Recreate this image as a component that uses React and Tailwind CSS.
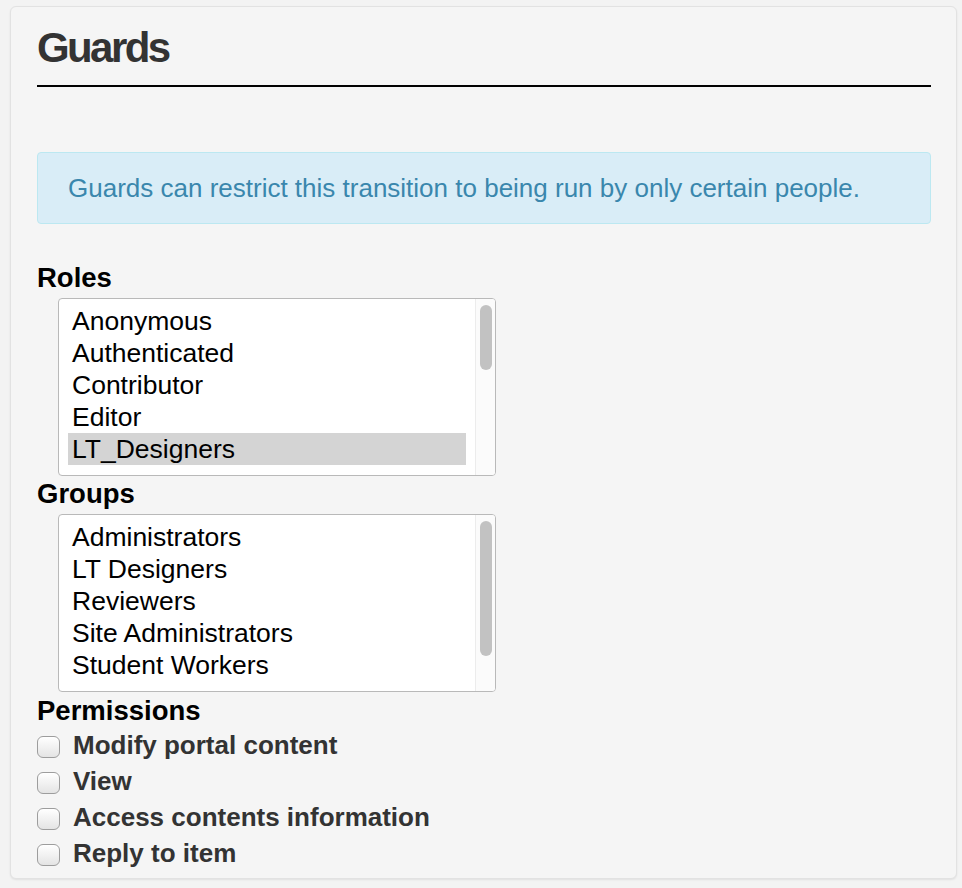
import React from "react";

const roles = ["Anonymous", "Authenticated", "Contributor", "Editor", "LT_Designers"];
const groups = ["Administrators", "LT Designers", "Reviewers", "Site Administrators", "Student Workers"];
const permissions = ["Modify portal content", "View", "Access contents information", "Reply to item"];

const ListBox = ({ items, selected, thumbHeight }) => (
    <div className="ml-[21px] mt-[4px] flex h-[178px] w-[438px] overflow-hidden rounded-[4px] border border-[#b9b9b9] bg-white">
        <div className="flex-1 pl-[9px] pr-[9px] pt-[6px]">
            {items.map((item) => (
                <div
                    key={item}
                    className={
                        "h-[32px] pl-[4px] text-[26.5px] leading-[32px] text-black " +
                        (item === selected ? "bg-[#d4d4d4]" : "")
                    }
                >
                    {item}
                </div>
            ))}
        </div>
        <div className="w-[20px] border-l border-[#ececec] bg-[#fbfbfb] pt-[6px] pl-[4px]">
            <div className="w-[12px] rounded-full bg-[#c2c2c2]" style={{ height: thumbHeight }} />
        </div>
    </div>
);

const Label = ({ children, className = "" }) => (
    <div className={"h-[32px] text-[27.5px] font-bold leading-[32px] text-black " + className}>{children}</div>
);

export default function App() {
    return (
        <div className="min-h-[888px] bg-[#f3f3f3] pt-[6px] pl-[10px] font-['Liberation_Sans',Arial,sans-serif]">
            <div className="h-[873px] w-[947px] rounded-[6px] border border-[#e2e2e2] bg-[#f5f5f5] pl-[26px] pt-[17px] shadow-[0_1px_2px_rgba(0,0,0,0.08)]">
                <div className="w-[894px]">
                    <h1 className="h-[48px] text-[42px] font-bold leading-[48px] tracking-[-2.6px] text-[#333]">
                        Guards
                    </h1>
                    <div className="mt-[13px] h-[2px] bg-black" />

                    <div className="mt-[65px] flex h-[72px] items-center rounded-[4px] border border-[#bce8f1] bg-[#d9edf7] pl-[30px]">
                        <p className="text-[26px] leading-[30px] text-[#3a87ad]">
                            Guards can restrict this transition to being run by only certain people.
                        </p>
                    </div>

                    <Label className="mt-[38px]">Roles</Label>
                    <ListBox items={roles} selected="LT_Designers" thumbHeight={65} />

                    <Label className="mt-[2px]">Groups</Label>
                    <ListBox items={groups} thumbHeight={135} />

                    <Label className="mt-[3px]">Permissions</Label>
                    <div>
                        {permissions.map((perm) => (
                            <label key={perm} className="flex h-[36px] items-start">
                                <span className="mt-[9px] h-[22px] w-[23px] rounded-[6px] border border-[#9d9d9d] bg-gradient-to-b from-white to-[#e4e4e4] shadow-[inset_0_1px_0_#fff]" />
                                <span className="ml-[13px] text-[26px] font-bold leading-[36px] text-[#333]">{perm}</span>
                            </label>
                        ))}
                    </div>
                </div>
            </div>
        </div>
    );
}
